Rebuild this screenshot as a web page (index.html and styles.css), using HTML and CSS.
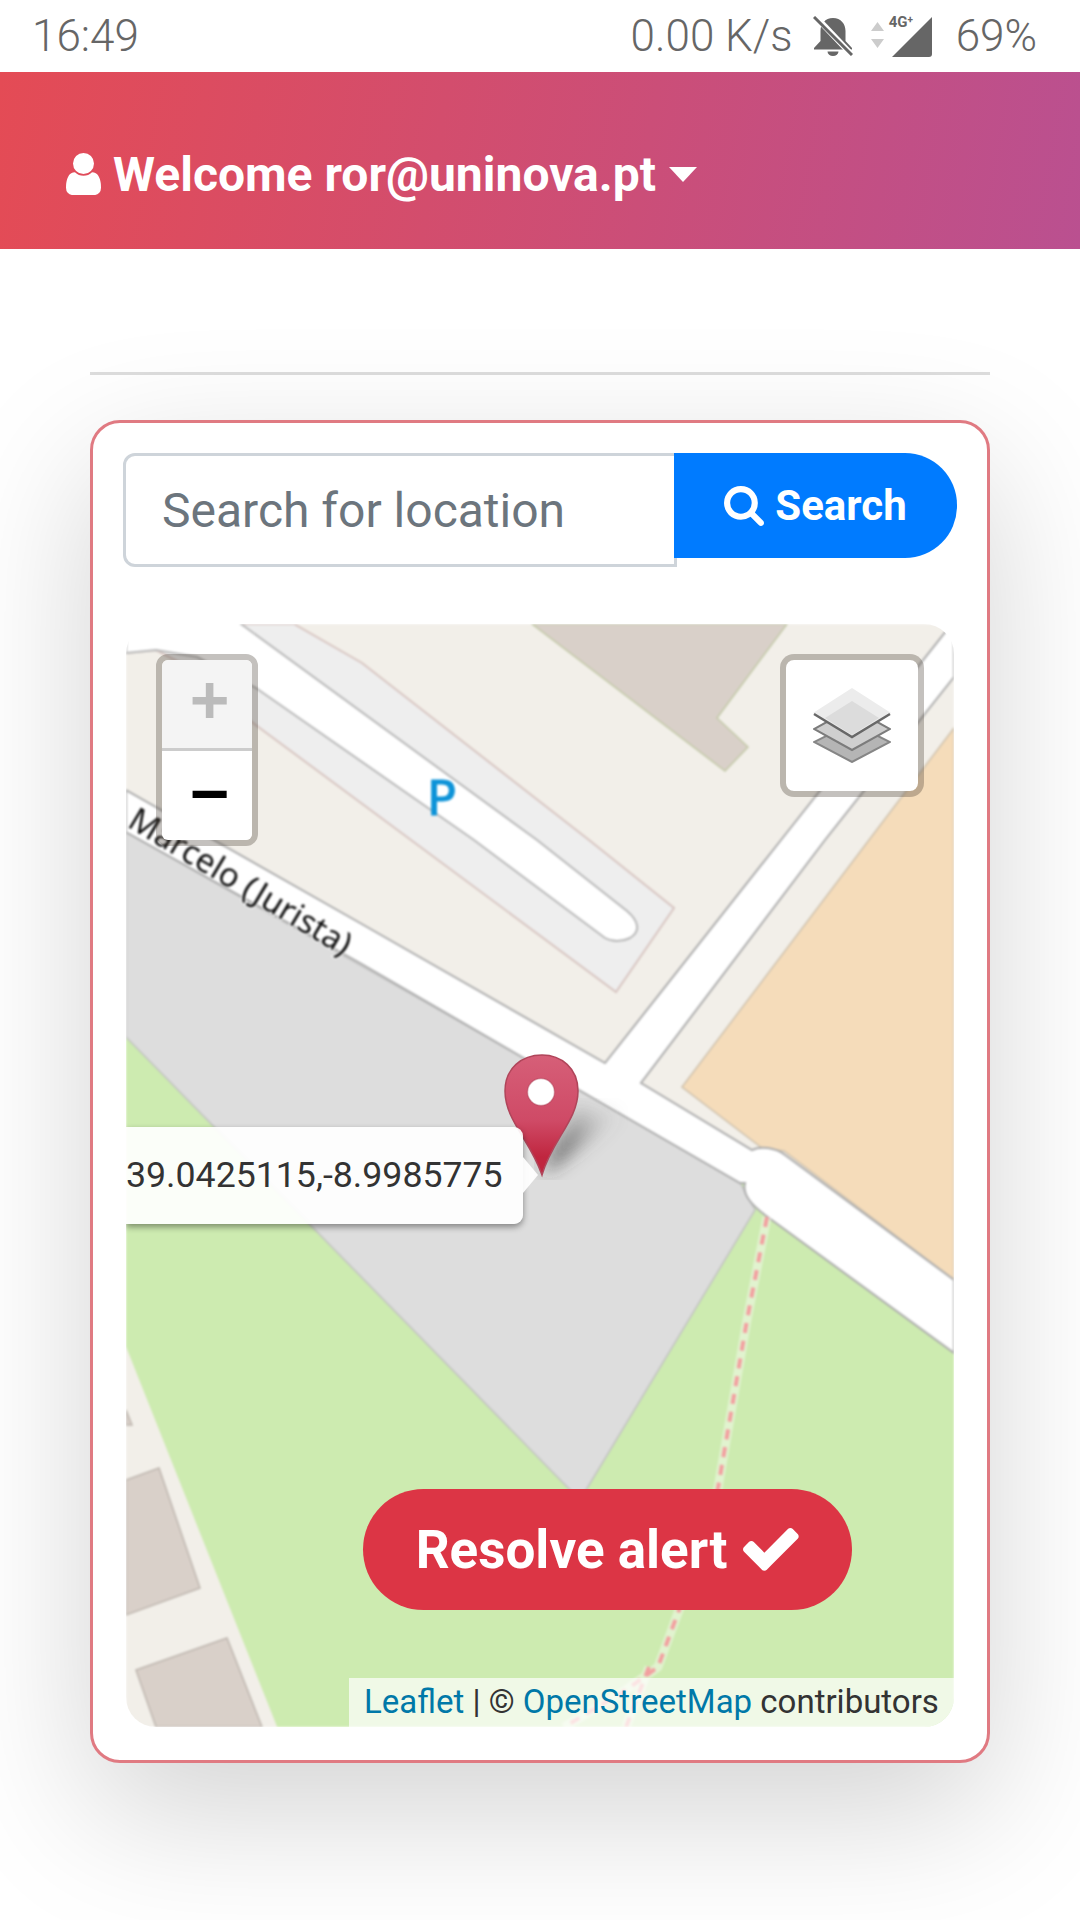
FILE: index.html
```html
<!DOCTYPE html>
<html lang="en">
<head>
<meta charset="utf-8">
<title>Resolve alert</title>
<link rel="stylesheet" href="styles.css">
</head>
<body>
<div class="status">
  <span class="clock">16:49</span>
  <div class="status-right">
    <span class="speed">0.00 K/s</span>
    <svg class="bell" viewBox="0 0 40 40"><path fill="#666" d="M20 2c-8 0-12.500 6-12.500 13v10L1 32v1.500h38V32l-6.500-7V15C32.500 8 28 2 20 2zM14.500 35.500a5.500 4.500 0 0 0 11 0z"/><path d="M2 0l38 40" stroke="#fff" stroke-width="6"/><path d="M1 1l38 38" stroke="#666" stroke-width="3"/></svg>
    <svg class="arrows" viewBox="0 0 13 28"><path fill="#ccc" d="M6.500 0L13 9H0zM0 17h13l-6.500 9z"/></svg>
    <div class="signal">
      <svg class="signal-bars" viewBox="0 0 40 40"><path fill="#666" d="M40 0v37a3 3 0 0 1-3 3H0z"/></svg>
      <span class="net">4G<sup class="net-plus">+</sup></span>
    </div>
    <span class="battery">69%</span>
  </div>
</div>

<header class="topbar">
  <svg class="user" viewBox="256 128 1280 1536"><path fill="#fff" d="M1536 1399q0 109-62.500 187t-150.500 78h-854q-88 0-150.500-78t-62.500-187q0-85 8.500-160.500t31.500-152 58.500-131 94-89 134.500-34.500q131 128 313 128t313-128q76 0 134.500 34.500t94 89 58.500 131 31.500 152 8.500 160.500zm-256-887q0 159-112.500 271.500t-271.500 112.500-271.500-112.500-112.500-271.500 112.500-271.500 271.500-112.500 271.500 112.500 112.500 271.500z"/></svg>
  <span class="welcome">Welcome ror@uninova.pt</span>
  <span class="caret"></span>
</header>

<main class="content">
  <hr class="rule">
  <section class="card">
    <form class="search">
      <input class="search-input" type="text" placeholder="Search for location">
      <button class="search-btn" type="button">
        <svg class="search-icon" viewBox="0 0 1664 1664"><path fill="#fff" d="M1152 704q0-185-131.500-316.500t-316.500-131.500-316.500 131.500-131.500 316.500 131.500 316.500 316.500 131.500 316.500-131.500 131.500-316.500zm512 832q0 52-38 90t-90 38q-54 0-90-38l-343-342q-179 124-399 124-143 0-273.500-55.500t-225-150-150-225-55.500-273.500 55.500-273.500 150-225 225-150 273.500-55.500 273.500 55.500 225 150 150 225 55.500 273.500q0 220-124 399l343 343q37 37 37 90z"/></svg>
        Search
      </button>
    </form>

    <div class="map">
      <svg class="tiles" viewBox="126 624 828 1103">
        <rect x="126" y="624" width="828" height="1103" fill="#f2efe9"/>
        <!-- top building -->
        <path fill="#d9d0c9" stroke="#c3c9a8" stroke-width="1.500" d="M532 624H787L717 718L748 747L725 771Z"/>
        <!-- parking -->
        <path fill="#eeeeee" stroke="#d8c6c2" stroke-width="2" d="M241 624H294L362 663L589 840L674 908L616 992L411 840L253 723L190 668L156 650L126 653V624Z"/>
        <path fill="#fff" stroke="#b9b9b9" stroke-width="2" d="M126 624H241L537 840L627 911C640 922 640 932 630 938C622 942 612 942 605 938L474 840L256 688L197 657L156 650L126 653Z"/>
        <path fill="#fff" d="M120 620H240V630H120Z"/>
        <!-- orange -->
        <path fill="#f5dcba" stroke="#cfc2ae" stroke-width="1.500" d="M682 1087L869 840L954 728V1280L784 1151L762 1148Z"/>
        <!-- green -->
        <path fill="#cdebb0" d="M126 1000L760 1180L960 1340V1727H277L126 1347Z"/>
        <!-- grey lot -->
        <path fill="#dddddd" stroke="#c2c2c2" stroke-width="1.500" d="M126 832L515 1053L740 1183L755 1210L580 1500L126 1037Z"/>
        <!-- main road joined with the service road -->
        <path fill="#fff" stroke="#adadad" stroke-width="2" d="M126 790L360 923L605 1063L781 840L954 621V677L825 840L641 1083L752 1150C760 1146 775 1147 785 1155L954 1280V1353L765 1215C752 1205 742 1195 745 1183L740 1183L515 1053L360 963L126 832Z"/>
        <!-- lower-left beige and buildings -->
        <path fill="#f2efe9" d="M126 1347L277 1727H126Z"/>
        <path fill="#d9d0c9" stroke="#bfb7b0" stroke-width="1.500" d="M126 1410L132 1425L126 1425Z"/>
        <path fill="#d9d0c9" stroke="#bfb7b0" stroke-width="1.500" d="M126 1480L159 1468L200 1588L126 1615Z"/>
        <path fill="#d9d0c9" stroke="#bfb7b0" stroke-width="1.500" d="M136 1670L227 1638L262 1727H156Z"/>
        <!-- footway -->
        <path class="foot-halo" d="M767 1217L747 1320L718 1488L679 1610L658 1667L626 1690L564 1727M649 1667L626 1727"/>
        <path class="foot-dash" d="M767 1217L747 1320L718 1488L679 1610L658 1667L626 1690L564 1727M649 1667L626 1727"/>
        <text class="park" x="427" y="815">P</text>
        <text class="road" transform="translate(126 826) rotate(31)">Marcelo (Jurista)</text>
      </svg>

      <svg class="marker" viewBox="500 1048 140 132">
        <defs>
          <linearGradient id="pin" x1="0" y1="0" x2="0" y2="1">
            <stop offset="0" stop-color="#d65f78"/>
            <stop offset="0.55" stop-color="#cf4a66"/>
            <stop offset="0.85" stop-color="#c0263f"/>
          </linearGradient>
          <linearGradient id="pinshadow" x1="0" y1="1" x2="1" y2="0">
            <stop offset="0.2" stop-color="#333" stop-opacity=".85"/>
            <stop offset="0.8" stop-color="#666" stop-opacity=".1"/>
          </linearGradient>
          <filter id="soft"><feGaussianBlur stdDeviation="9"/></filter>
        </defs>
        <path fill="url(#pinshadow)" filter="url(#soft)" d="M542 1175L575 1105L620 1115Z"/>
        <path fill="url(#pin)" stroke="#b0455a" stroke-width="1.500" d="M542 1175C530 1140 505 1120 505 1091C505 1068 522 1055 542 1055C561 1055 578 1068 578 1091C578 1120 552 1140 542 1175Z"/>
        <circle cx="541" cy="1092" r="13.500" fill="#fff" stroke="#a83a50" stroke-opacity=".4" stroke-width="1.500"/>
      </svg>

      <div class="tooltip">39.0425115,-8.9985775</div>

      <div class="zoom-box">
        <a class="zoom-btn zoom-in">+</a>
        <a class="zoom-btn zoom-out">−</a>
      </div>

      <div class="layers">
        <svg class="layers-icon" viewBox="0 0 78 75">
          <path fill="#b5b5b5" stroke="#868686" stroke-width="2" d="M39 35L77 54L39 74L1 54Z"/>
          <path fill="#cfcfcf" stroke="#7c7c7c" stroke-width="2" d="M39 20L77 41L39 62L1 41Z"/>
          <path fill="#ececec" d="M39 0L78 25L39 49L0 25Z"/>
          <path fill="#dcdcdc" d="M39 13L66 30L39 47L12 30Z"/>
          <path fill="none" stroke="#686868" stroke-width="2.500" d="M1 26L39 49L77 26"/>
        </svg>
      </div>

      <button class="resolve" type="button">
        Resolve alert
        <svg class="check" viewBox="120 350 1560 1190"><path fill="#fff" d="M1671 566q0 40-28 68l-724 724-136 136q-28 28-68 28t-68-28l-136-136-362-362q-28-28-28-68t28-68l136-136q28-28 68-28t68 28l294 295 656-657q28-28 68-28t68 28l136 136q28 28 28 68z"/></svg>
      </button>

      <div class="attribution"><a class="link">Leaflet</a> | © <a class="link">OpenStreetMap</a> contributors</div>
    </div>
  </section>
</main>
</body>
</html>
```
FILE: styles.css
```css
* { box-sizing: border-box; }
html, body { margin: 0; padding: 0; }
body {
  width: 1080px;
  height: 1920px;
  overflow: hidden;
  background: #fff;
  font-family: Roboto, "Liberation Sans", sans-serif;
}

.status {
  height: 72px;
  padding: 0 43px 0 32px;
  display: flex;
  align-items: center;
  justify-content: space-between;
  color: #666;
  font-size: 44px;
  font-weight: 300;
  background: #fff;
}
.status-right { display: flex; align-items: center; }
.speed { margin-right: 20px; }
.bell { width: 40px; height: 40px; margin-right: 18px; }
.arrows { width: 13px; height: 28px; margin-right: 5px; }
.signal { position: relative; width: 44px; height: 42px; margin-right: 23px; }
.signal-bars { position: absolute; right: 1px; bottom: 0; width: 40px; height: 40px; }
.net {
  position: absolute;
  left: 0;
  top: 0;
  font-size: 15px;
  line-height: 14px;
  font-weight: 700;
  color: #666;
  background: #fff;
  padding-right: 1px;
}
.net-plus { font-size: 10px; line-height: 0; vertical-align: 4px; }

.topbar {
  height: 177px;
  padding: 27px 0 0 66px;
  display: flex;
  align-items: center;
  background: linear-gradient(100deg, #e44b55 0%, #ba5090 100%);
  color: #fff;
}
.user { width: 35px; height: 42px; margin-right: 12px; }
.welcome { font-size: 48px; font-weight: 700; }
.caret {
  margin-left: 13px;
  width: 0;
  height: 0;
  border-left: 14px solid transparent;
  border-right: 14px solid transparent;
  border-top: 15px solid #fff;
}

.content { padding: 123px 90px 0; }
.rule { margin: 0 0 45px; border: 0; height: 3px; background: #ddd; }
.card {
  height: 1343px;
  border: 3px solid #e07a82;
  border-radius: 30px;
  padding: 30px 30px 33px 30px;
  background: #fff;
  box-shadow: 0 48px 144px rgba(0, 0, 0, .175);
}

.search { display: flex; align-items: flex-start; }
.search-input {
  flex: none;
  width: 554px;
  height: 114px;
  border: 3px solid #ced4da;
  border-radius: 12px 0 0 12px;
  padding: 0 36px;
  font-family: inherit;
  font-size: 48px;
  color: #495057;
  background: #fff;
  outline: 0;
}
.search-input::placeholder { color: #6c757d; opacity: 1; }
.search-btn {
  flex: none;
  position: relative;
  margin-left: -3px;
  width: 283px;
  height: 105px;
  border: 0;
  border-radius: 0 52px 52px 0;
  background: #007bff;
  color: #fff;
  font-family: inherit;
  font-size: 42px;
  font-weight: 700;
  display: flex;
  align-items: center;
  justify-content: center;
  gap: 11px;
}
.search-icon { width: 40px; height: 40px; }

.map {
  position: relative;
  margin: 57px 0 0 3px;
  width: 828px;
  height: 1103px;
  border-radius: 30px;
  overflow: hidden;
}
.tiles { display: block; width: 828px; height: 1103px; filter: blur(1px); }
.park {
  font-family: "DejaVu Sans", sans-serif;
  font-size: 48px;
  fill: #0d93d8;
  stroke: #0d93d8;
  stroke-width: 1px;
}
.road {
  font-family: "Noto Sans", sans-serif;
  font-size: 33px;
  fill: #111;
  stroke: #fff;
  stroke-width: 2px;
  paint-order: stroke;
}
.foot-halo { fill: none; stroke: rgba(255, 255, 255, .4); stroke-width: 9; }
.foot-dash { fill: none; stroke: #f2a0a0; stroke-width: 4; stroke-dasharray: 10 8; }

.marker { position: absolute; left: 374px; top: 424px; width: 140px; height: 132px; }

.tooltip {
  position: absolute;
  left: 0;
  top: 503px;
  width: 397px;
  height: 97px;
  border-radius: 0 9px 9px 0;
  background: rgba(255, 255, 255, .92);
  box-shadow: 0 3px 6px rgba(0, 0, 0, .4);
  color: #333;
  font-size: 35.700px;
  line-height: 97px;
  white-space: nowrap;
}
.tooltip::after {
  content: "";
  position: absolute;
  left: 100%;
  top: 30px;
  width: 0;
  height: 0;
  border-top: 18px solid transparent;
  border-bottom: 18px solid transparent;
  border-left: 15px solid rgba(255, 255, 255, .92);
}

.zoom-box {
  position: absolute;
  left: 30px;
  top: 30px;
  width: 102px;
  height: 192px;
  border: 6px solid rgba(60, 50, 40, .3);
  border-radius: 12px;
  background-clip: padding-box;
}
.zoom-btn {
  display: flex;
  align-items: center;
  justify-content: center;
  width: 90px;
  padding: 0 0 4px 5px;
  font-family: "Liberation Sans", sans-serif;
  font-weight: 700;
  font-size: 68px;
}
.zoom-in {
  height: 91px;
  padding-bottom: 10px;
  background: #f4f4f4;
  color: #bbb;
  border-bottom: 3px solid #ccc;
  border-radius: 6px 6px 0 0;
}
.zoom-out {
  height: 89px;
  padding-bottom: 6px;
  background: #fff;
  color: #000;
  border-radius: 0 0 6px 6px;
}

.layers {
  position: absolute;
  left: 654px;
  top: 30px;
  width: 144px;
  height: 143px;
  border: 6px solid rgba(60, 50, 40, .3);
  border-radius: 14px;
  background: #fff;
  background-clip: padding-box;
  display: flex;
  align-items: center;
  justify-content: center;
}
.layers-icon { width: 78px; height: 75px; }

.resolve {
  position: absolute;
  left: 237px;
  top: 865px;
  width: 489px;
  height: 121px;
  border: 0;
  border-radius: 61px;
  background: #dc3545;
  color: #fff;
  font-family: inherit;
  font-size: 53px;
  font-weight: 700;
  display: flex;
  align-items: center;
  justify-content: center;
  gap: 16px;
}
.check { width: 56px; height: 44px; }

.attribution {
  position: absolute;
  right: 0;
  bottom: 0;
  height: 49px;
  width: 605px;
  padding-left: 15px;
  background: rgba(255, 255, 255, .7);
  color: #333;
  font-size: 33px;
  line-height: 47px;
  white-space: nowrap;
}
.link { color: #0078a8; }
```
